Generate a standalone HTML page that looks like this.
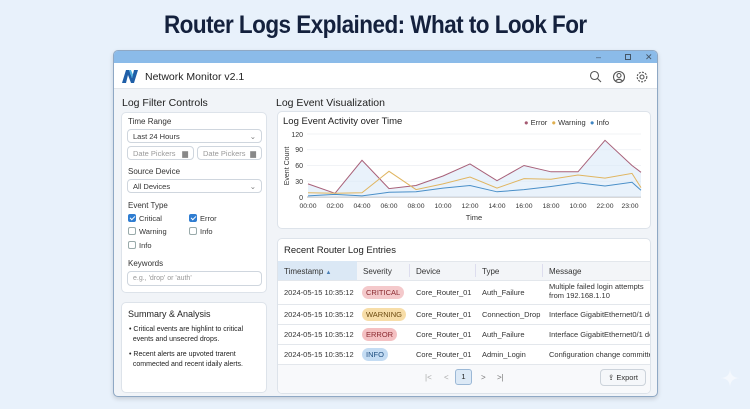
<!DOCTYPE html>
<html><head><meta charset="utf-8"><style>
*{box-sizing:border-box;margin:0;padding:0}
body{width:750px;height:409px;overflow:hidden;background:#e8f1fb;font-family:"Liberation Sans",sans-serif;color:#222;position:relative}
.a{position:absolute}
.t{font-size:8px;color:#333;white-space:nowrap}
.card{position:absolute;background:#fff;border:1px solid #dde3ea;border-radius:5px}
.inp{position:absolute;background:#fff;border:1px solid #cfd6de;border-radius:4px;font-size:7.5px;color:#333;padding:0 5px;display:flex;align-items:center}
.cb{position:absolute;width:8px;height:8px;border:1px solid #9aa;border-radius:2px;background:#fff}
.cb.on{background:#2f7dd1;border-color:#2f7dd1}
.cb.on:after{content:"";position:absolute;left:2px;top:0px;width:2px;height:4px;border:solid #fff;border-width:0 1.3px 1.3px 0;transform:rotate(45deg)}
.badge{position:absolute;font-size:7.5px;padding:2px 4px;border-radius:7px}
.row{position:absolute;left:0;width:374px;border-top:1px solid #e3e7ec}
</style></head><body>
<div class="a" style="left:0;top:11px;width:750px;text-align:center;font-size:25px;font-weight:bold;color:#14213d;letter-spacing:-0.6px;transform:scaleX(0.9);transform-origin:378px 0">Router Logs Explained: What to Look For</div>

<div class="a" style="left:113px;top:50px;width:545px;height:347px;background:#f1f4f8;border:1px solid #8fa8c4;border-radius:5px;box-shadow:0 2px 5px rgba(0,0,0,.15);overflow:hidden">
 <div class="a" style="left:0;top:0;width:545px;height:12px;background:#8bbbe9"></div>
 <div class="a t" style="left:482px;top:1px;font-size:9px;color:#456">–</div>
 <div class="a" style="left:511px;top:3px;width:6px;height:6px;border:1px solid #456"></div>
 <div class="a t" style="left:531px;top:1px;font-size:9px;color:#456">✕</div>
 <div class="a" style="left:0;top:12px;width:545px;height:26px;background:#fff;border-bottom:1px solid #e2e6eb"></div>
 <svg class="a" style="left:7px;top:17px" width="18" height="16" viewBox="0 0 18 16"><path d="M1 15 L5 2 L8 2 L11 10 L13 2 L17 2 L13 15 L10 15 L7 7 L5 15Z" fill="#1f5fa8"/><path d="M8 2 L11 10 L12 7 L10 2Z" fill="#4ab0e0"/></svg>
 <div class="a" style="left:31px;top:20px;font-size:10.5px;color:#222">Network Monitor v2.1</div>
 <svg class="a" style="left:475px;top:19px" width="60" height="14" viewBox="0 0 60 14" fill="none" stroke="#555" stroke-width="1.1"><circle cx="5.5" cy="5.5" r="4"/><path d="M8.5 8.5 L12 12"/><circle cx="30" cy="7" r="5.5"/><circle cx="30" cy="5.5" r="2"/><path d="M26.5 11 Q30 7.5 33.5 11"/><circle cx="53" cy="7" r="2"/><circle cx="53" cy="7" r="4.8" stroke-dasharray="2 1.2"/></svg>

 <div class="a" style="left:8px;top:46px;font-size:10.5px;color:#222">Log Filter Controls</div>
 <div class="card" style="left:7px;top:61px;width:146px;height:181px">
  <div class="a t" style="left:6px;top:4px">Time Range</div>
  <div class="inp" style="left:5px;top:16px;width:135px;height:14px">Last 24 Hours<span style="margin-left:auto;color:#777">⌄</span></div>
  <div class="inp" style="left:5px;top:33px;width:67px;height:14px;color:#999">Date Pickers<span style="margin-left:auto;color:#888">▆</span></div>
  <div class="inp" style="left:75px;top:33px;width:65px;height:14px;color:#999">Date Pickers<span style="margin-left:auto;color:#888">▆</span></div>
  <div class="a t" style="left:6px;top:54px">Source Device</div>
  <div class="inp" style="left:5px;top:66px;width:135px;height:14px">All Devices<span style="margin-left:auto;color:#777">⌄</span></div>
  <div class="a t" style="left:6px;top:88px">Event Type</div>
  <div class="cb on" style="left:6px;top:101px"></div><div class="a t" style="left:17px;top:101px;font-size:7.5px">Critical</div>
  <div class="cb on" style="left:67px;top:101px"></div><div class="a t" style="left:78px;top:101px;font-size:7.5px">Error</div>
  <div class="cb" style="left:6px;top:114px"></div><div class="a t" style="left:17px;top:114px;font-size:7.5px">Warning</div>
  <div class="cb" style="left:67px;top:114px"></div><div class="a t" style="left:78px;top:114px;font-size:7.5px">Info</div>
  <div class="cb" style="left:6px;top:128px"></div><div class="a t" style="left:17px;top:128px;font-size:7.5px">Info</div>
  <div class="a t" style="left:6px;top:146px">Keywords</div>
  <div class="inp" style="left:5px;top:158px;width:135px;height:15px;color:#999;font-size:7px">e.g., 'drop' or 'auth'</div>
 </div>
 <div class="card" style="left:7px;top:251px;width:146px;height:91px">
  <div class="a" style="left:6px;top:6px;font-size:9px;color:#222">Summary &amp; Analysis</div>
  <div class="a" style="left:7px;top:22px;font-size:7px;line-height:10px;color:#222;width:135px">• Critical events are highlint to critical<br>&nbsp;&nbsp;events and unsecred drops.</div>
  <div class="a" style="left:7px;top:47px;font-size:7px;line-height:10px;color:#222;width:135px">• Recent alerts are upvoted trarent<br>&nbsp;&nbsp;commected and recent idaily alerts.</div>
 </div>

 <div class="a" style="left:162px;top:46px;font-size:10.5px;color:#222">Log Event Visualization</div>
 <div class="card" style="left:163px;top:60px;width:374px;height:118px"></div>
 <div class="a" style="left:169px;top:65px;font-size:9.5px;color:#222">Log Event Activity over Time</div>
 <div class="a t" style="left:410px;top:67px;font-size:7.5px"><span style="color:#a55a72">●</span> Error &nbsp;<span style="color:#e0b050">●</span> Warning &nbsp;<span style="color:#3f86c4">●</span> Info</div>

 <div class="card" style="left:163px;top:187px;width:374px;height:156px;overflow:hidden">
  <div class="a" style="left:6px;top:6px;font-size:9.5px;color:#222">Recent Router Log Entries</div>
  <div class="a" style="left:0;top:22px;width:374px;height:19px;background:#f3f5f8;border-top:1px solid #e3e7ec"></div>
  <div class="a" style="left:0;top:22px;width:79px;height:19px;background:#dbe8f5"></div>
  <div class="a t" style="left:6px;top:28px">Timestamp <span style="color:#4a7fb5;font-size:6px">▲</span></div>
  <div class="a t" style="left:85px;top:28px">Severity</div>
  <div class="a t" style="left:138px;top:28px">Device</div>
  <div class="a t" style="left:204px;top:28px">Type</div>
  <div class="a t" style="left:271px;top:28px">Message</div>
  <div class="a" style="left:131px;top:25px;width:1px;height:13px;background:#dde"></div>
  <div class="a" style="left:197px;top:25px;width:1px;height:13px;background:#dde"></div>
  <div class="a" style="left:264px;top:25px;width:1px;height:13px;background:#dde"></div>
  <div class="row" style="top:41px;height:24px"></div>
  <div class="row" style="top:65px;height:20px"></div>
  <div class="row" style="top:85px;height:20px"></div>
  <div class="row" style="top:105px;height:20px"></div>
  <div class="row" style="top:125px;height:30px;background:#f8f9fb"></div>

  <div class="a t" style="left:6px;top:49px;font-size:7.5px">2024-05-15 10:35:12</div>
  <div class="badge" style="left:84px;top:47px;background:#f4c9cb;color:#8a2a30">CRITICAL</div>
  <div class="a t" style="left:138px;top:49px;font-size:7.5px">Core_Router_01</div>
  <div class="a t" style="left:204px;top:49px;font-size:7.5px">Auth_Failure</div>
  <div class="a t" style="left:271px;top:43px;font-size:7.5px;line-height:9px">Multiple failed login attempts<br>from 192.168.1.10</div>

  <div class="a t" style="left:6px;top:71px;font-size:7.5px">2024-05-15 10:35:12</div>
  <div class="badge" style="left:84px;top:69px;background:#f7dda8;color:#6b4a10">WARNING</div>
  <div class="a t" style="left:138px;top:71px;font-size:7.5px">Core_Router_01</div>
  <div class="a t" style="left:204px;top:71px;font-size:7.5px">Connection_Drop</div>
  <div class="a t" style="left:271px;top:71px;font-size:7.5px">Interface GigabitEthernet0/1 dow</div>

  <div class="a t" style="left:6px;top:91px;font-size:7.5px">2024-05-15 10:35:12</div>
  <div class="badge" style="left:84px;top:89px;background:#f4c0c2;color:#8a2a30">ERROR</div>
  <div class="a t" style="left:138px;top:91px;font-size:7.5px">Core_Router_01</div>
  <div class="a t" style="left:204px;top:91px;font-size:7.5px">Auth_Failure</div>
  <div class="a t" style="left:271px;top:91px;font-size:7.5px">Interface GigabitEthernet0/1 dow</div>

  <div class="a t" style="left:6px;top:111px;font-size:7.5px">2024-05-15 10:35:12</div>
  <div class="badge" style="left:84px;top:109px;background:#c4dcf3;color:#1f4f80">INFO</div>
  <div class="a t" style="left:138px;top:111px;font-size:7.5px">Core_Router_01</div>
  <div class="a t" style="left:204px;top:111px;font-size:7.5px">Admin_Login</div>
  <div class="a t" style="left:271px;top:111px;font-size:7.5px">Configuration change committed</div>

  <div class="a t" style="left:147px;top:134px;color:#aaa">|&lt;</div>
  <div class="a t" style="left:166px;top:134px;color:#aaa">&lt;</div>
  <div class="a" style="left:177px;top:130px;width:17px;height:16px;border:1px solid #9bb8d6;border-radius:3px;background:#dce9f6;font-size:7.5px;text-align:center;line-height:14px">1</div>
  <div class="a t" style="left:203px;top:134px;color:#777">&gt;</div>
  <div class="a t" style="left:219px;top:134px;color:#777">&gt;|</div>
  <div class="a" style="left:322px;top:130px;width:46px;height:17px;border:1px solid #ccd3db;border-radius:4px;background:#f5f7fa;font-size:7.5px;text-align:center;line-height:15px;color:#333">⇪ Export</div>
 </div>
</div>

<svg class="a" style="left:0;top:0" width="750" height="409" font-family="Liberation Sans" font-size="7" fill="#333">
 <g stroke="#eceff3" stroke-width="0.7"><line x1="307" y1="134" x2="641" y2="134"/><line x1="307" y1="149.75" x2="641" y2="149.75"/><line x1="307" y1="165.5" x2="641" y2="165.5"/><line x1="307" y1="181.25" x2="641" y2="181.25"/></g>
 <line x1="307" y1="197" x2="641" y2="197" stroke="#999" stroke-width="0.7"/>
 <g text-anchor="end"><text x="303" y="137">120</text><text x="303" y="152">90</text><text x="303" y="168">60</text><text x="303" y="184">30</text><text x="303" y="200">0</text></g>
 <text transform="translate(289,166) rotate(-90)" text-anchor="middle" font-size="7">Event Count</text>
 <g text-anchor="middle" font-size="6.8"><text x="308" y="208">00:00</text><text x="335" y="208">02:00</text><text x="362" y="208">04:00</text><text x="389" y="208">06:00</text><text x="416" y="208">08:00</text><text x="443" y="208">10:00</text><text x="470" y="208">12:00</text><text x="497" y="208">14:00</text><text x="524" y="208">16:00</text><text x="551" y="208">18:00</text><text x="578" y="208">10:00</text><text x="605" y="208">22:00</text><text x="630" y="208">23:00</text></g>
 <text x="474" y="220" text-anchor="middle" font-size="7.5">Time</text>
 <polygon points="308,183.9 335,193.3 362,160.3 389,188.6 416,185.5 443,176 470,163.9 497,180.7 524,165.5 551,171.8 578,171.8 605,140.3 632,165.5 641,172.3 641,197 308,197" fill="#dbeaf8" opacity="0.6"/>
 <polyline fill="none" stroke="#a86078" stroke-width="1" points="308,183.9 335,193.3 362,160.3 389,188.6 416,185.5 443,176 470,163.9 497,180.7 524,165.5 551,171.8 578,171.8 605,140.3 632,165.5 641,172.3"/>
 <polyline fill="none" stroke="#e0b560" stroke-width="1" points="308,192.8 335,193.3 362,192.8 389,171.3 416,189.6 443,183.9 470,177 497,188.1 524,178.6 551,179.2 578,175 605,178.1 632,173.4 641,187.6"/>
 <polyline fill="none" stroke="#4a8fc8" stroke-width="1" points="308,195.9 335,194.4 362,195.9 389,192.3 416,191.8 443,188.1 470,185.5 497,191.8 524,189.6 551,186.5 578,182.8 605,186 632,182.3 641,190.2"/>
 <path d="M730 388 Q730 378 740 378 Q730 378 730 368 Q730 378 720 378 Q730 378 730 388Z" fill="#f4f8fd"/>
</svg>
</body></html>
